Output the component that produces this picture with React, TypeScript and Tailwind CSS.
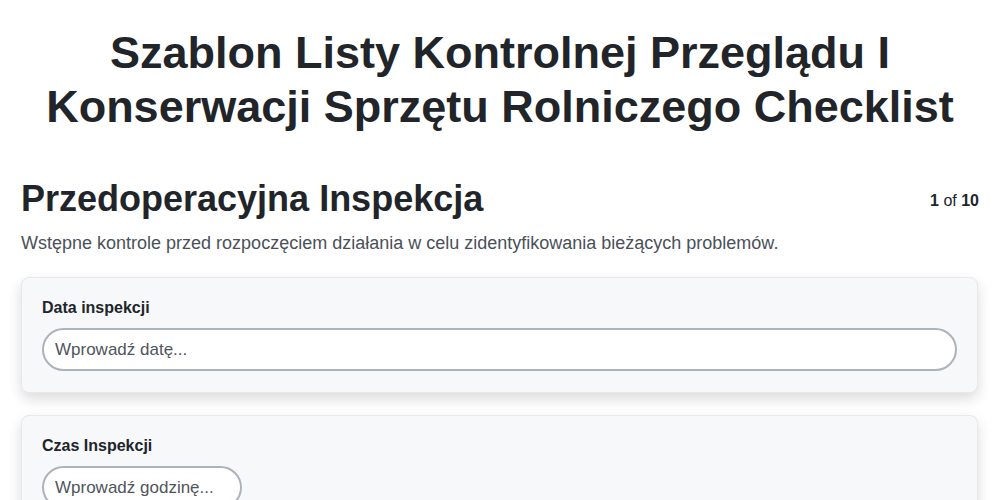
import React from "react";

function Field({ label, placeholder, narrow }: { label: string; placeholder: string; narrow?: boolean }) {
  return (
    <div className="rounded-lg border border-[#e6e8eb] bg-[#f7f8fa] px-5 pt-[18px] pb-[21px] shadow-[0_6px_14px_rgba(0,0,0,0.14)]">
      <div className="text-[16px] font-bold leading-6 text-[#212529]">{label}</div>
      <input
        type="text"
        placeholder={placeholder}
        className={`mt-[8px] block h-[43px] rounded-full border-2 border-[#adb3ba] bg-white px-[11px] text-[17px] text-[#212529] placeholder:text-[#4f555c] outline-none ${narrow ? "w-[200px]" : "w-full"}`}
        style={{ fontFamily: '"Liberation Sans", Arial, sans-serif' }}
      />
    </div>
  );
}

export default function App() {
  return (
    <div
      className="min-h-[500px] bg-white text-[#212529]"
      style={{ fontFamily: '"Liberation Sans", Arial, Helvetica, sans-serif' }}
    >
      <div className="px-[21px] pt-[26px]">
        <h1 className="text-center text-[45px] font-bold leading-[54px] text-[#212529]">
          Szablon Listy Kontrolnej Przeglądu I
          <br />
          Konserwacji Sprzętu Rolniczego Checklist
        </h1>
        <div className="mt-[43px] flex items-start justify-between">
          <h2 className="text-[36px] font-bold leading-[1.2] text-[#212529]">Przedoperacyjna Inspekcja</h2>
          <div className="mt-[12px] text-[16px] leading-6 text-[#212529]">
            <span className="font-bold">1</span> of <span className="font-bold">10</span>
          </div>
        </div>
        <p className="mt-[10px] text-[18px] leading-[27px] text-[#4a5159]">
          Wstępne kontrole przed rozpoczęciem działania w celu zidentyfikowania bieżących problemów.
        </p>
        <div className="mt-[20px] flex flex-col gap-[22px] pr-[1px]">
          <Field label="Data inspekcji" placeholder="Wprowadź datę..." />
          <Field label="Czas Inspekcji" placeholder="Wprowadź godzinę..." narrow />
        </div>
      </div>
    </div>
  );
}
